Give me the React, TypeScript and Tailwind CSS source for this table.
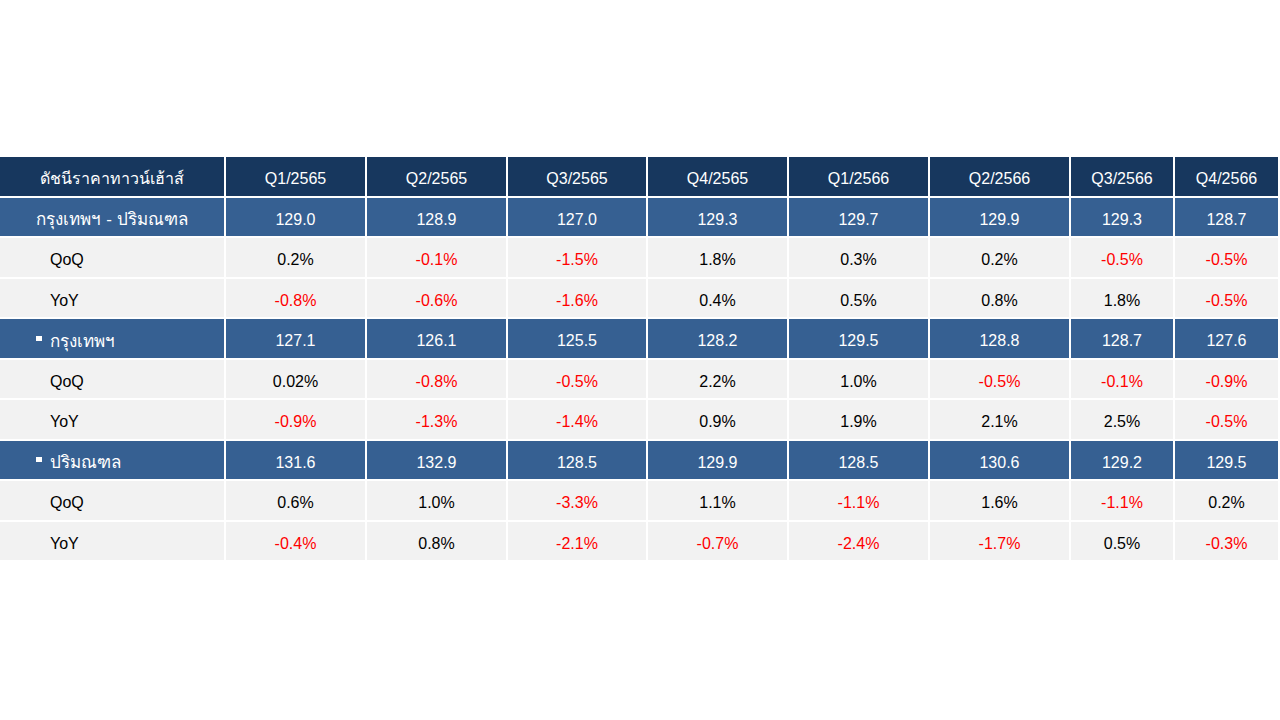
const headers = ["Q1/2565", "Q2/2565", "Q3/2565", "Q4/2565", "Q1/2566", "Q2/2566", "Q3/2566", "Q4/2566"];

type Row = { label: string; kind: "main" | "sub" | "pct"; values: string[] };

const rows: Row[] = [
  { label: "กรุงเทพฯ - ปริมณฑล", kind: "main", values: ["129.0", "128.9", "127.0", "129.3", "129.7", "129.9", "129.3", "128.7"] },
  { label: "QoQ", kind: "pct", values: ["0.2%", "-0.1%", "-1.5%", "1.8%", "0.3%", "0.2%", "-0.5%", "-0.5%"] },
  { label: "YoY", kind: "pct", values: ["-0.8%", "-0.6%", "-1.6%", "0.4%", "0.5%", "0.8%", "1.8%", "-0.5%"] },
  { label: "กรุงเทพฯ", kind: "sub", values: ["127.1", "126.1", "125.5", "128.2", "129.5", "128.8", "128.7", "127.6"] },
  { label: "QoQ", kind: "pct", values: ["0.02%", "-0.8%", "-0.5%", "2.2%", "1.0%", "-0.5%", "-0.1%", "-0.9%"] },
  { label: "YoY", kind: "pct", values: ["-0.9%", "-1.3%", "-1.4%", "0.9%", "1.9%", "2.1%", "2.5%", "-0.5%"] },
  { label: "ปริมณฑล", kind: "sub", values: ["131.6", "132.9", "128.5", "129.9", "128.5", "130.6", "129.2", "129.5"] },
  { label: "QoQ", kind: "pct", values: ["0.6%", "1.0%", "-3.3%", "1.1%", "-1.1%", "1.6%", "-1.1%", "0.2%"] },
  { label: "YoY", kind: "pct", values: ["-0.4%", "0.8%", "-2.1%", "-0.7%", "-2.4%", "-1.7%", "0.5%", "-0.3%"] },
];

const font = { fontFamily: '"Liberation Sans", Arial, sans-serif' };

export default function App() {
  return (
    <div className="h-[720px] w-[1280px] bg-white pt-[157px]" style={font}>
      <div className="grid grid-cols-[224px_139px_139px_138px_139px_139px_139px_102px_103px] auto-rows-[38.5px] gap-[2px] text-[16px]">
        <div className="flex items-center justify-center bg-[#17375e] pt-[6px] text-[16px] text-white">ดัชนีราคาทาวน์เฮ้าส์</div>
        {headers.map((h) => (
          <div key={h} className="flex items-center justify-center bg-[#17375e] pt-[6px] text-white">
            {h}
          </div>
        ))}

        {rows.map((row, i) => {
          const blue = row.kind !== "pct";
          const bg = blue ? "bg-[#366092]" : "bg-[#f2f2f2]";
          return [
            <div
              key={`l${i}`}
              className={
                row.kind === "main"
                  ? `flex items-center justify-center ${bg} pt-[6px] text-[17px] text-white`
                  : row.kind === "sub"
                    ? `flex items-center pl-[36px] ${bg} pt-[6px] text-[17px] text-white`
                    : `flex items-center pl-[50px] ${bg} pt-[6px] text-black`
              }
            >
              {row.kind === "sub" && <span className="mr-[8px] inline-block h-[5px] w-[6px] -translate-y-[3px] bg-white" />}
              {row.label}
            </div>,
            ...row.values.map((v, j) => (
              <div
                key={`v${i}-${j}`}
                className={`flex items-center justify-center ${bg} pt-[6px] ${
                  blue ? "text-white" : v.startsWith("-") ? "text-[#ff0000]" : "text-black"
                }`}
              >
                {v}
              </div>
            )),
          ];
        })}
      </div>
    </div>
  );
}
